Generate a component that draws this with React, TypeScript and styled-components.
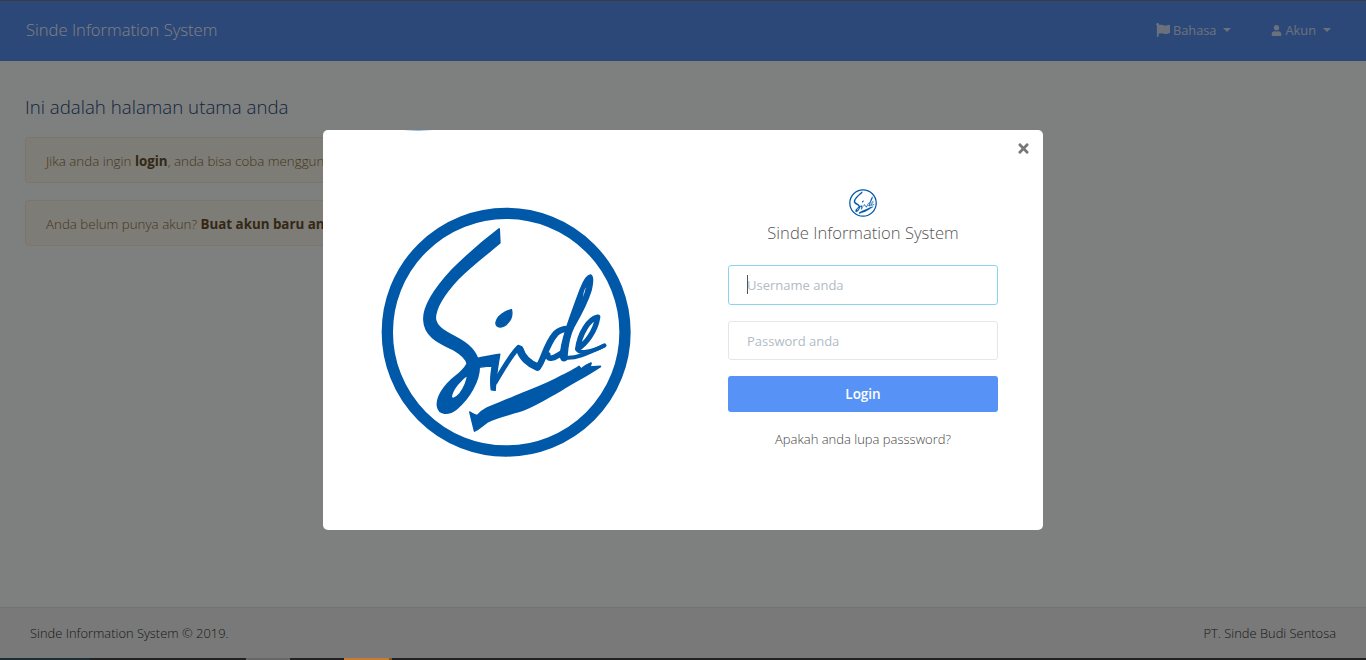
import React from "react";
import styled, { createGlobalStyle } from "styled-components";
import { FaFlag, FaUser, FaTimes } from "react-icons/fa";

const Global = createGlobalStyle`
  html, body { margin: 0; padding: 0; height: 100%; overflow: hidden; }
  body { font-family: "Open Sans", "Liberation Sans", sans-serif; background: #fff; color: #333; }
  #root { height: 100%; }
`;

const Page = styled.div`
  height: 660px;
  display: flex;
  flex-direction: column;
  background: #fcfffe;
`;
const Navbar = styled.header`
  box-sizing: border-box;
  height: 61px;
  border-top: 1px solid #777;
  background: #5790f0;
  display: flex;
  align-items: center;
  justify-content: space-between;
  padding: 0 35px 4px 26px;
`;
const Brand = styled.div`
  font-size: 16.6px;
  font-weight: 300;
  color: #fff;
`;
const NavMenu = styled.nav`
  display: flex;
  gap: 40px;
  padding-top: 2px;
`;
const NavItem = styled.div`
  display: flex;
  align-items: center;
  gap: 3px;
  font-size: 12.8px;
  color: #fff;
  opacity: 0.75;
`;
const Caret = styled.span`
  width: 0;
  height: 0;
  margin-left: 4px;
  border-top: 4px solid currentColor;
  border-left: 4px solid transparent;
  border-right: 4px solid transparent;
`;
const Main = styled.main`
  flex: 1;
  padding: 33px 25px 0;
`;
const Heading = styled.h1`
  margin: 0 0 18px;
  font-size: 18.7px;
  line-height: 25px;
  font-weight: 300;
  color: #2b4a7a;
`;
const Alert = styled.div`
  width: fit-content;
  box-sizing: border-box;
  height: 46px;
  margin-bottom: 17px;
  padding: 1px 20px 0;
  display: flex;
  align-items: center;
  white-space: pre;
  font-size: 13.35px;
  font-weight: 300;
  color: #8a6d3b;
  background: #fdf8ec;
  border: 1px solid #fbeccf;
  border-radius: 4px;
  b { font-weight: 700; color: #66512c; }
`;
const Footer = styled.footer`
  height: 50px;
  border-top: 1px solid #e4e4e4;
  background: #f0f3f0;
  display: flex;
  align-items: center;
  justify-content: space-between;
  padding: 0 30px;
  font-size: 12.9px;
  font-weight: 300;
  color: #333;
`;
const TaskStrip = styled.div`
  position: relative;
  z-index: 2;
  height: 2px;
  display: flex;
  background: #222;
`;
const StripPart = styled.span<{ $w: number; $c: string }>`
  width: ${(p) => p.$w}px;
  background: ${(p) => p.$c};
`;
const Backdrop = styled.div`
  position: fixed;
  inset: 0;
  background: rgba(0, 0, 0, 0.5);
  display: flex;
  justify-content: center;
  align-items: flex-start;
  padding: 130px 0 0 0;
`;
const Modal = styled.div`
  position: relative;
  width: 720px;
  height: 400px;
  background: #fff;
  border-radius: 5px;
  display: grid;
  grid-template-columns: 360px 360px;
`;
const Glint = styled.span`
  position: absolute;
  top: 0;
  left: 80px;
  width: 30px;
  height: 1px;
  background: radial-gradient(ellipse at center, #8fb8f0, transparent 70%);
`;
const Close = styled.span`
  position: absolute;
  top: 11px;
  right: 12px;
  font-size: 15px;
  line-height: 15px;
  color: #777;
`;
const LogoCol = styled.div`
  display: flex;
  align-items: center;
  justify-content: center;
  padding: 3px 0 0 5px;
`;
const FormCol = styled.form`
  display: flex;
  flex-direction: column;
  align-items: center;
  padding: 59px 45px 0;
`;
const BrandName = styled.div`
  margin-top: 4px;
  margin-bottom: 20px;
  font-size: 16.6px;
  line-height: 24px;
  font-weight: 300;
  color: #555;
`;
const FieldWrap = styled.div<{ $h: number }>`
  position: relative;
  width: 270px;
  height: ${(p) => p.$h}px;
  margin-bottom: 16px;
`;
const Field = styled.input<{ $active?: boolean }>`
  box-sizing: border-box;
  width: 100%;
  height: 100%;
  padding: 0 18px;
  border: 1px solid ${(p) => (p.$active ? "#8ad4ee" : "#e4e7ea")};
  border-radius: 3px;
  font-family: inherit;
  font-size: 13px;
  outline: none;
  &::placeholder { color: #b1bcc4; opacity: 1; }
`;
const TextCursor = styled.span`
  position: absolute;
  left: 19px;
  top: 10px;
  width: 1px;
  height: 19px;
  background: #4a5560;
`;
const LoginButton = styled.button`
  width: 270px;
  height: 36px;
  border: 0;
  border-radius: 3px;
  background: #5793f7;
  color: #fff;
  font-family: inherit;
  font-size: 13.5px;
  font-weight: 600;
`;
const Forgot = styled.a`
  margin-top: 18px;
  font-size: 13px;
  line-height: 18px;
  color: #444;
  font-weight: 300;
`;

const SindeLogo = ({ size }: { size: number }) => (
  <svg width={size} height={size} viewBox="118 46 757 757" aria-label="Sinde">
    <circle cx="497" cy="425" r="357" fill="none" stroke="#0058a9" strokeWidth="34" />
    <g fill="#0058a9" stroke="#0058a9" strokeWidth="5" strokeLinejoin="round">
      <path fillRule="evenodd" d="M476 115 L478 157 C445 185 395 222 352 265 C315 305 283 350 284 385 C288 415 325 428 362 450 C392 468 412 490 416 525 C418 570 385 625 348 655 C322 675 295 672 291 648 C287 622 310 585 345 558 C360 546 372 534 380 520 C378 505 360 490 340 478 C300 458 252 440 250 388 C248 345 285 292 335 238 C375 198 430 150 476 115 Z M382 552 C362 565 335 595 332 618 C332 628 345 625 358 610 C372 592 380 570 382 552 Z" />
      <path d="M388 665 C396 672 402 672 410 676 C430 650 470 642 515 622 C555 603 610 588 665 556 C680 548 700 540 716 528 L722 536 C732 528 740 522 752 518 L748 530 L780 528 C740 555 700 575 660 600 C610 628 590 642 550 658 C510 672 470 678 440 695 C425 705 415 717 402 722 Z" />
    </g>
    <g transform="translate(360 225)">
      <g fill="#0058a9" stroke="#0058a9" strokeWidth="4" strokeLinejoin="round">
        <path d="M153 132 C135 137 110 150 106 172 C106 187 128 190 142 172 C152 162 156 146 153 132 Z" />
        <path d="M30 285 C60 275 95 270 118 266 C112 300 106 340 104 375 L92 373 C88 340 92 320 95 302 C75 302 55 306 35 308 Z" />
        <path fillRule="evenodd" d="M300 275 C298 235 330 150 360 70 C370 45 380 28 390 28 C398 30 398 50 392 75 C380 115 360 150 340 185 C330 205 322 240 320 270 C326 288 304 292 300 275 Z M367 106 C372 88 379 70 379 56 C370 68 364 85 367 106 Z" />
      </g>
      <g fill="none" stroke="#0058a9" strokeLinecap="round" strokeLinejoin="round">
        <path strokeWidth="15" d="M104 350 C128 310 150 270 174 246" />
        <path strokeWidth="23" d="M178 252 C185 275 205 295 230 304" />
        <path strokeWidth="19" d="M232 306 C250 285 255 240 285 205 C295 195 310 190 322 190" />
        <path strokeWidth="17" d="M262 268 C262 285 280 280 308 260" />
        <path strokeWidth="16" d="M352 250 C375 235 405 200 412 155 C385 160 358 205 352 250" />
        <path strokeWidth="12" d="M312 276 C340 282 380 265 432 240" />
        <path strokeWidth="12" d="M352 252 C355 264 390 262 432 240" />
      </g>
    </g>
  </svg>
);

export default function App() {
  return (
    <>
      <Global />
      <Page>
        <Navbar>
          <Brand>Sinde Information System</Brand>
          <NavMenu>
            <NavItem><FaFlag size={14} /> Bahasa <Caret /></NavItem>
            <NavItem><FaUser size={11} /> Akun <Caret /></NavItem>
          </NavMenu>
        </Navbar>
        <Main>
          <Heading>Ini adalah halaman utama anda</Heading>
          <Alert><span>Jika anda ingin <b>login</b>, anda bisa coba menggunakan akun demo</span></Alert>
          <Alert><span>Anda belum punya akun? <b>Buat akun baru anda</b></span></Alert>
        </Main>
        <Footer>
          <span>Sinde Information System © 2019.</span>
          <span>PT. Sinde Budi Sentosa</span>
        </Footer>
        <TaskStrip>
          <StripPart $w={90} $c="#1c2c35" />
          <StripPart $w={156} $c="#222" />
          <StripPart $w={44} $c="#666" />
          <StripPart $w={54} $c="#222" />
          <StripPart $w={45} $c="#c67a33" />
          <StripPart $w={3} $c="#8a5020" />
        </TaskStrip>
      </Page>
      <Backdrop>
        <Modal>
          <Glint />
          <Close><FaTimes /></Close>
          <LogoCol><SindeLogo size={252} /></LogoCol>
          <FormCol>
            <SindeLogo size={28} />
            <BrandName>Sinde Information System</BrandName>
            <FieldWrap $h={40}>
              <Field $active placeholder="Username anda" />
              <TextCursor />
            </FieldWrap>
            <FieldWrap $h={39}>
              <Field placeholder="Password anda" type="password" />
            </FieldWrap>
            <LoginButton type="button">Login</LoginButton>
            <Forgot>Apakah anda lupa passsword?</Forgot>
          </FormCol>
        </Modal>
      </Backdrop>
    </>
  );
}
